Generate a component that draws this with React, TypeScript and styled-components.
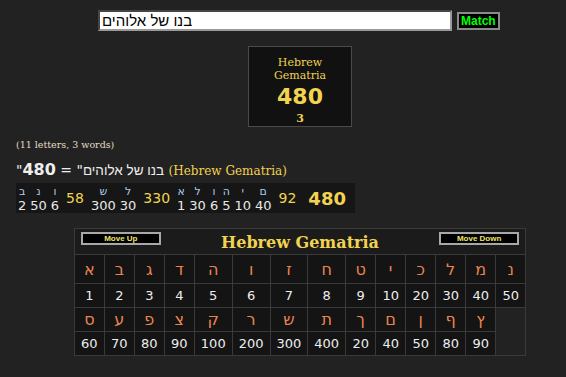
import React from 'react';
import styled, { createGlobalStyle } from 'styled-components';

const GlobalStyle = createGlobalStyle`
  html, body {
    margin: 0;
    padding: 0;
    background: #222222;
    color: #dddddd;
  }
  body {
    font-family: "DejaVu Sans", sans-serif;
  }
`;

const gold = '#f2d34f';
const orange = '#e9854e';

const row1 = [
  ['א', 1], ['ב', 2], ['ג', 3], ['ד', 4], ['ה', 5], ['ו', 6], ['ז', 7],
  ['ח', 8], ['ט', 9], ['י', 10], ['כ', 20], ['ל', 30], ['מ', 40], ['נ', 50],
] as const;

const row2 = [
  ['ס', 60], ['ע', 70], ['פ', 80], ['צ', 90], ['ק', 100], ['ר', 200], ['ש', 300],
  ['ת', 400], ['ך', 20], ['ם', 40], ['ן', 50], ['ף', 80], ['ץ', 90],
] as const;

const words = [
  { letters: [['ב', 2], ['נ', 50], ['ו', 6]], sum: 58 },
  { letters: [['ש', 300], ['ל', 30]], sum: 330 },
  { letters: [['א', 1], ['ל', 30], ['ו', 6], ['ה', 5], ['י', 10], ['ם', 40]], sum: 92 },
];

function App() {
  return (
    <>
      <GlobalStyle />
      <Page>
        <SearchRow>
          <SearchField role="textbox">
            <bdi>בנו של אלוהים</bdi>
          </SearchField>
          <MatchButton>Match</MatchButton>
        </SearchRow>

        <Centered>
          <ResultBox>
            <BoxTitle>Hebrew<br />Gematria</BoxTitle>
            <BoxValue>480</BoxValue>
            <BoxCount>3</BoxCount>
          </ResultBox>
        </Centered>

        <Counts>(11 letters, 3 words)</Counts>

        <Equation>
          "<b>480</b> = "<bdi>בנו של אלוהים</bdi> <Cipher>(Hebrew Gematria)</Cipher>
        </Equation>

        <Breakdown>
          <tbody>
            <tr>
              {words.map((w, i) => (
                <React.Fragment key={i}>
                  {w.letters.map(([l], j) => (
                    <LetterCell key={j}>{l}</LetterCell>
                  ))}
                  <SumCell rowSpan={2}>{w.sum}</SumCell>
                </React.Fragment>
              ))}
              <TotalCell rowSpan={2}>480</TotalCell>
            </tr>
            <tr>
              {words.map((w, i) =>
                w.letters.map(([, v], j) => <ValueCell key={`${i}-${j}`}>{v}</ValueCell>)
              )}
            </tr>
          </tbody>
        </Breakdown>

        <Centered>
          <CipherTable>
            <tbody>
              <tr>
                <HeaderCell colSpan={14}>
                  <HeaderBar>
                    <MoveButton>Move Up</MoveButton>
                    <TableTitle>Hebrew Gematria</TableTitle>
                    <MoveButton>Move Down</MoveButton>
                  </HeaderBar>
                </HeaderCell>
              </tr>
              <tr>
                {row1.map(([l]) => <HebCell key={l} $tall>{l}</HebCell>)}
              </tr>
              <tr>
                {row1.map(([l, v]) => <NumCell key={l}>{v}</NumCell>)}
              </tr>
              <tr>
                {row2.map(([l]) => <HebCell key={l}>{l}</HebCell>)}
              </tr>
              <tr>
                {row2.map(([l, v]) => <NumCell key={l}>{v}</NumCell>)}
              </tr>
            </tbody>
          </CipherTable>
        </Centered>
      </Page>
    </>
  );
}

export default App;

const Page = styled.div`
  width: 566px;
  height: 377px;
  box-sizing: border-box;
  padding: 10px 0 0 16px;
  overflow: hidden;
`;

const SearchRow = styled.div`
  display: flex;
  align-items: center;
  gap: 5px;
  margin-left: 82px;
`;

const SearchField = styled.div`
  width: 354px;
  height: 21px;
  box-sizing: border-box;
  border: 2px inset #9a9a9a;
  background: #ffffff;
  color: #000;
  padding: 0 2px;
  font-family: "Liberation Sans", sans-serif;
  font-size: 15px;
  line-height: 17px;
  text-align: left;
  direction: ltr;
  white-space: nowrap;
  overflow: hidden;
`;

const MatchButton = styled.button`
  height: 18px;
  box-sizing: border-box;
  padding: 0 2px;
  background: #000;
  border: 2px solid #8a8a8a;
  color: #00ff00;
  font-family: "Liberation Sans", sans-serif;
  font-weight: bold;
  font-size: 12px;
  line-height: 12px;
`;

const Centered = styled.div`
  display: flex;
  justify-content: center;
  padding-left: 18px;
`;

const ResultBox = styled.div`
  margin-top: 15px;
  width: 104px;
  height: 81px;
  box-sizing: border-box;
  border: 1px solid #4a4a4a;
  background: #111111;
  display: flex;
  flex-direction: column;
  align-items: center;
  padding-top: 9px;
  color: ${gold};
`;

const BoxTitle = styled.div`
  font-family: "DejaVu Serif", serif;
  font-size: 11px;
  line-height: 13px;
  text-align: center;
`;

const BoxValue = styled.div`
  font-family: "DejaVu Sans", sans-serif;
  font-weight: bold;
  font-size: 22px;
  line-height: 26px;
  margin-top: 2px;
`;

const BoxCount = styled.div`
  font-family: "DejaVu Serif", serif;
  font-weight: bold;
  font-size: 11px;
  line-height: 14px;
  margin-top: 2px;
`;

const Counts = styled.div`
  margin-top: 12px;
  font-family: "DejaVu Serif", serif;
  font-size: 9.5px;
  color: #e4dcc4;
  line-height: 12px;
`;

const Equation = styled.div`
  margin-top: 10px;
  direction: ltr;
  font-family: "DejaVu Sans", sans-serif;
  font-size: 14px;
  line-height: 18px;
  color: #eeeeee;
  b {
    font-size: 16px;
  }
  bdi {
    font-family: "Liberation Sans", sans-serif;
    font-size: 13.5px;
  }
`;

const Cipher = styled.span`
  font-family: "DejaVu Serif", serif;
  font-size: 12px;
  color: ${gold};
`;

const Breakdown = styled.table`
  margin-top: 3px;
  border-collapse: collapse;
  background: #161616;
  td {
    padding: 0 2px;
    text-align: center;
  }
`;

const LetterCell = styled.td`
  font-size: 11px;
  line-height: 13px;
  color: #a9cdef;
  vertical-align: bottom;
  && {
    padding-top: 2px;
  }
`;

const ValueCell = styled.td`
  font-size: 13px;
  line-height: 15px;
  color: #e8e8e8;
`;

const SumCell = styled.td`
  font-size: 14px;
  color: ${gold};
  && {
    padding: 0 5px;
  }
`;

const TotalCell = styled.td`
  font-size: 18px;
  font-weight: bold;
  color: ${gold};
  && {
    padding: 0 9px 0 7px;
  }
`;

const CipherTable = styled.table`
  margin-top: 15px;
  border-collapse: collapse;
  border: 1px solid #3a3a3a;
  td {
    border: 1px solid #3a3a3a;
    background: #141414;
    text-align: center;
    padding: 0 6px;
    min-width: 17px;
  }
`;

const HeaderCell = styled.td`
  && {
    background: #1b1b1b;
    padding: 3px 6px 2px 6px;
  }
`;

const HeaderBar = styled.div`
  display: flex;
  align-items: center;
  justify-content: space-between;
  height: 20px;
`;

const MoveButton = styled.div`
  width: 80px;
  height: 13px;
  box-sizing: border-box;
  border: 2px solid #a8a8a8;
  background: #000;
  color: #eee36a;
  font-family: "Liberation Sans", sans-serif;
  font-weight: bold;
  font-size: 8px;
  line-height: 9px;
  text-align: center;
  align-self: flex-start;
`;

const TableTitle = styled.div`
  font-family: "DejaVu Serif", serif;
  font-weight: bold;
  font-size: 16px;
  color: ${gold};
`;

const HebCell = styled.td<{ $tall?: boolean }>`
  height: ${(p) => (p.$tall ? 28 : 23)}px;
  font-size: 16px;
  color: ${orange};
`;

const NumCell = styled.td`
  height: 23px;
  font-size: 13px;
  color: #eeeeee;
`;
